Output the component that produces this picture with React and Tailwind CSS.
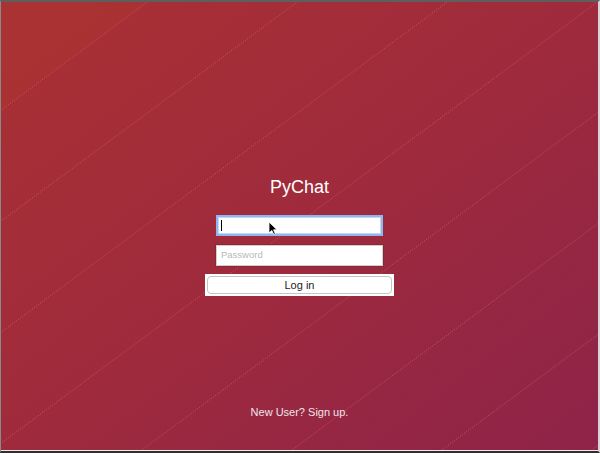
import React from "react";

const LINES = [111, 222, 333, 444, 555, 666, 777, 888];

export default function App() {
  return (
    <div className="w-[600px] h-[453px] flex flex-col bg-[#e9e3e6] border-t-2 border-t-[#5e5e5e] border-l border-l-[#8a8a8a] border-r-2 border-r-[#d9d2d6] border-b-2 border-b-[#2f2f2f] overflow-hidden">
      <div className="relative flex-1 flex flex-col items-center overflow-hidden border-b border-b-[#f4e9ee] bg-[linear-gradient(143deg,#a93134_0%,#a02b3b_45%,#8e2349_100%)] font-['Liberation_Sans',Arial,sans-serif]">
        <svg
          className="absolute inset-0 pointer-events-none"
          width="600"
          height="453"
          viewBox="1 2 600 453"
        >
          <polygon points="0,0 150,0 0,111" fill="#ad3630" opacity="0.45" />
          {LINES.map((c) => (
            <line
              key={c}
              x1="0"
              y1={c}
              x2={c / 0.74}
              y2="0"
              stroke="#d66a72"
              strokeWidth="1"
              strokeDasharray="1 1.5"
              opacity="0.7"
            />
          ))}
        </svg>

        <div className="relative pt-[175px] text-[18px] leading-[21px] text-white">
          PyChat
        </div>

        <div className="relative mt-[17px] w-[167px] h-[21px] bg-white border-2 border-[#8fb6ef] shadow-[inset_0_0_0_1px_#c4d8f6] flex items-center pl-[3px]">
          <div className="w-px h-[11px] bg-black" />
        </div>

        <div className="relative mt-[9px] w-[167px] h-[21px] bg-white border border-[#cfcfcf] shadow-[0_0_0_1px_#8c2832] flex items-center pl-[4px] text-[9.5px] text-[#b8b8b8]">
          Password
        </div>

        <div className="relative mt-[8px] w-[189px] h-[22px] bg-white p-[2px]">
          <div className="w-full h-full border border-[#c4c4c4] rounded-[4px] flex items-center justify-center text-[11px] text-[#1c1c1c]">
            Log in
          </div>
        </div>

        <div className="relative mt-auto pb-[31px] text-[11px] leading-[13px] text-[#f1e6ea]">
          New User? Sign up.
        </div>

        <svg
          className="absolute left-[267px] top-[219px]"
          width="11"
          height="15"
          viewBox="0 0 11 15"
        >
          <path
            d="M1 1 L1 12 L3.8 9.4 L5.8 13.6 L7.4 12.9 L5.5 8.8 L9 8.8 Z"
            fill="#000"
            stroke="#fff"
            strokeWidth="0.8"
          />
        </svg>
      </div>
    </div>
  );
}
